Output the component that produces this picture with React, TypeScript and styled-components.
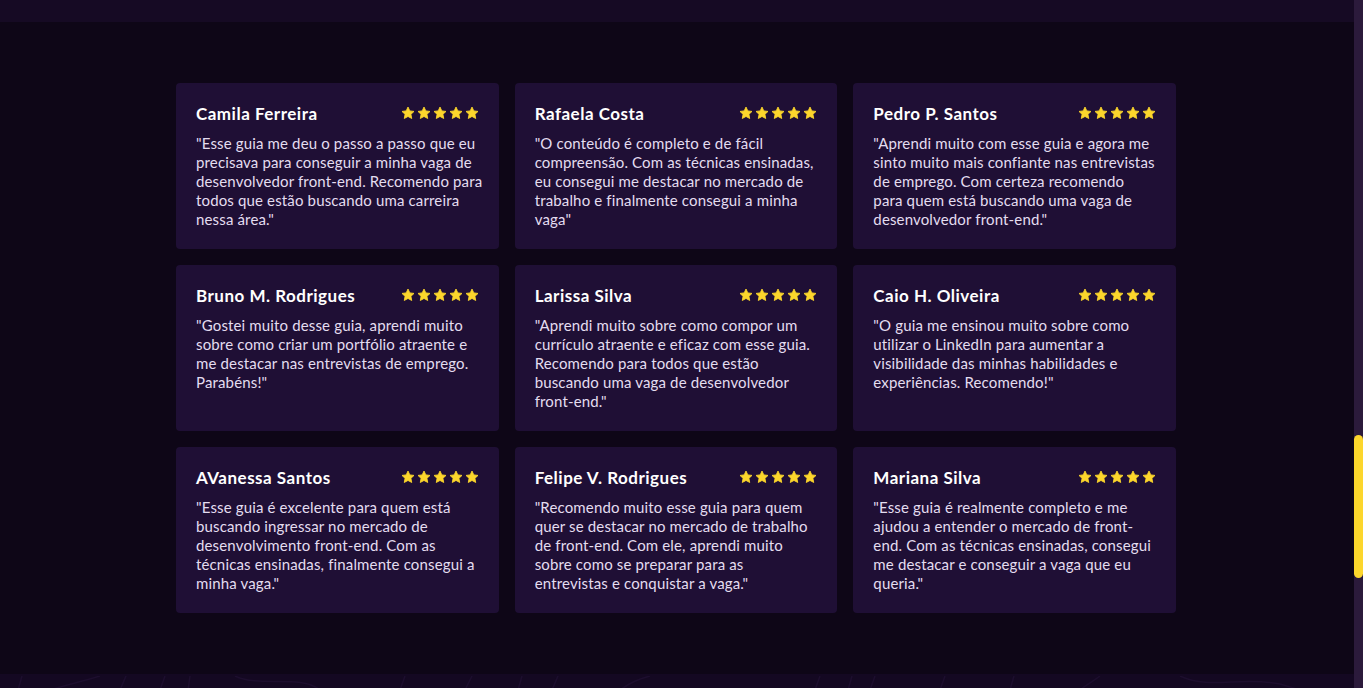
import { FC } from 'react';
import styled, { createGlobalStyle } from 'styled-components';

type Review = {
    name: string;
    // Quote, already broken into the lines it shows in the card
    lines: string[];
};

const reviews: Review[] = [
    {
        name: 'Camila Ferreira',
        lines: [
            '"Esse guia me deu o passo a passo que eu',
            'precisava para conseguir a minha vaga de',
            'desenvolvedor front-end. Recomendo para',
            'todos que estão buscando uma carreira',
            'nessa área."',
        ],
    },
    {
        name: 'Rafaela Costa',
        lines: [
            '"O conteúdo é completo e de fácil',
            'compreensão. Com as técnicas ensinadas,',
            'eu consegui me destacar no mercado de',
            'trabalho e finalmente consegui a minha',
            'vaga"',
        ],
    },
    {
        name: 'Pedro P. Santos',
        lines: [
            '"Aprendi muito com esse guia e agora me',
            'sinto muito mais confiante nas entrevistas',
            'de emprego. Com certeza recomendo',
            'para quem está buscando uma vaga de',
            'desenvolvedor front-end."',
        ],
    },
    {
        name: 'Bruno M. Rodrigues',
        lines: [
            '"Gostei muito desse guia, aprendi muito',
            'sobre como criar um portfólio atraente e',
            'me destacar nas entrevistas de emprego.',
            'Parabéns!"',
        ],
    },
    {
        name: 'Larissa Silva',
        lines: [
            '"Aprendi muito sobre como compor um',
            'currículo atraente e eficaz com esse guia.',
            'Recomendo para todos que estão',
            'buscando uma vaga de desenvolvedor',
            'front-end."',
        ],
    },
    {
        name: 'Caio H. Oliveira',
        lines: [
            '"O guia me ensinou muito sobre como',
            'utilizar o LinkedIn para aumentar a',
            'visibilidade das minhas habilidades e',
            'experiências. Recomendo!"',
        ],
    },
    {
        name: 'AVanessa Santos',
        lines: [
            '"Esse guia é excelente para quem está',
            'buscando ingressar no mercado de',
            'desenvolvimento front-end. Com as',
            'técnicas ensinadas, finalmente consegui a',
            'minha vaga."',
        ],
    },
    {
        name: 'Felipe V. Rodrigues',
        lines: [
            '"Recomendo muito esse guia para quem',
            'quer se destacar no mercado de trabalho',
            'de front-end. Com ele, aprendi muito',
            'sobre como se preparar para as',
            'entrevistas e conquistar a vaga."',
        ],
    },
    {
        name: 'Mariana Silva',
        lines: [
            '"Esse guia é realmente completo e me',
            'ajudou a entender o mercado de front-',
            'end. Com as técnicas ensinadas, consegui',
            'me destacar e conseguir a vaga que eu',
            'queria."',
        ],
    },
];

const GlobalStyle = createGlobalStyle`
    html, body {
        margin: 0;
        padding: 0;
        background: #0e0617;
        overflow: hidden;
    }
    * {
        box-sizing: border-box;
    }
`;

const Page = styled.div`
    display: flex;
    width: 100vw;
    height: 100vh;
    background: #0e0617;
    font-family: 'Lato', 'Noto Sans', sans-serif;
`;

const Main = styled.div`
    flex: 1;
    display: flex;
    flex-direction: column;
    overflow: hidden;
`;

const TopBar = styled.div`
    height: 22px;
    flex-shrink: 0;
    background: #160a24;
`;

const Section = styled.section`
    flex: 1;
    display: flex;
    justify-content: center;
    padding: 61px 2px 0 0;
`;

const Grid = styled.div`
    width: 1000px;
    display: grid;
    grid-template-columns: repeat(3, minmax(0, 1fr));
    grid-auto-rows: 166px;
    gap: 16px;
    align-content: start;
`;

const Card = styled.article`
    background: #1f0f35;
    border-radius: 4px;
    padding: 20px;
    display: flex;
    flex-direction: column;
    gap: 11px;
    min-width: 0;
`;

const CardHeader = styled.header`
    display: flex;
    align-items: center;
    justify-content: space-between;
    height: 20px;
`;

const Name = styled.h3`
    margin: 0;
    color: #ffffff;
    font-size: 17px;
    font-weight: 700;
    letter-spacing: 0.5px;
`;

const Stars = styled.div`
    display: flex;
    gap: 2px;
`;

const Quote = styled.p`
    margin: 0;
    color: #e4ddf0;
    font-size: 15px;
    line-height: 19px;
    letter-spacing: 0.15px;
`;

const QuoteLine = styled.span`
    display: block;
    white-space: nowrap;
`;

const Footer = styled.div`
    height: 14px;
    flex-shrink: 0;
    background: #140822;
    overflow: hidden;
`;

const ScrollTrack = styled.div`
    width: 9px;
    flex-shrink: 0;
    background: #2b1a3b;
    padding-top: 435px;
`;

const ScrollThumb = styled.div`
    height: 143px;
    border-radius: 5px;
    background: #fcd62c;
`;

const Star: FC = () => (
    <svg width="14" height="14" viewBox="0 0 24 24">
        <path
            fill="#fcd62c"
            d="M12 1.8l3.1 6.6 7.2.9-5.3 5 1.4 7.1L12 17.9l-6.4 3.5 1.4-7.1-5.3-5 7.2-.9z"
            strokeLinejoin="round"
            stroke="#fcd62c"
            strokeWidth="1.5"
        />
    </svg>
);

const Waves: FC = () => (
    <svg width="100%" height="14" viewBox="0 0 1354 14" preserveAspectRatio="none">
        <g fill="none" stroke="#1d0e2e" strokeWidth="1.5">
            <path d="M18 14 L22 0" />
            <path d="M50 14 C70 8 80 6 100 0" />
            <path d="M120 14 L126 0" />
            <path d="M160 14 L165 0" />
            <path d="M188 14 L190 0" />
            <path d="M235 0 C260 12 300 -2 320 14" />
            <path d="M400 14 L405 0" />
            <path d="M465 14 L472 0" />
            <path d="M518 14 L522 0" />
            <path d="M552 14 L558 0" />
            <path d="M620 14 C632 6 636 4 650 0" />
            <path d="M815 14 L820 0" />
            <path d="M848 14 L852 0" />
            <path d="M870 14 L875 0" />
            <path d="M940 14 L945 0" />
            <path d="M1010 14 L1014 0" />
            <path d="M1080 14 C1090 6 1095 4 1100 0" />
            <path d="M1180 0 C1210 14 1240 0 1280 8 L1300 14" />
        </g>
    </svg>
);

const ReviewCard: FC<{ review: Review }> = ({ review }) => (
    <Card>
        <CardHeader>
            <Name>{review.name}</Name>
            <Stars>
                {[0, 1, 2, 3, 4].map((i) => (
                    <Star key={i} />
                ))}
            </Stars>
        </CardHeader>
        <Quote>
            {review.lines.map((line) => (
                <QuoteLine key={line}>{line}</QuoteLine>
            ))}
        </Quote>
    </Card>
);

export default function App() {
    return (
        <>
            <GlobalStyle />
            <Page>
                <Main>
                    <TopBar />
                    <Section>
                        <Grid>
                            {reviews.map((review) => (
                                <ReviewCard key={review.name} review={review} />
                            ))}
                        </Grid>
                    </Section>
                    <Footer>
                        <Waves />
                    </Footer>
                </Main>
                <ScrollTrack>
                    <ScrollThumb />
                </ScrollTrack>
            </Page>
        </>
    );
}
